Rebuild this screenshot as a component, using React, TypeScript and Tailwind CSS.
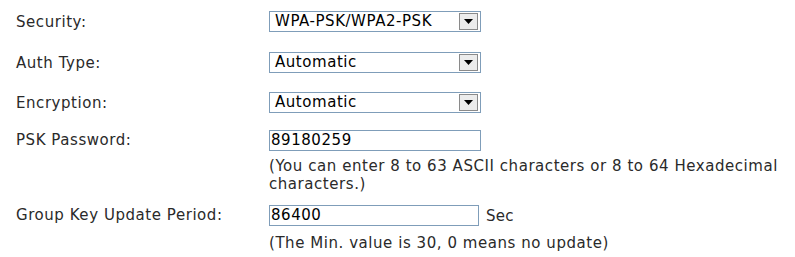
import React from 'react';

const labelCls = 'w-[253px] shrink-0';

function Select({ value }: { value: string }) {
  return (
    <div className="flex h-[21px] w-[212px] items-center border border-[#7f9db9] bg-white pl-[5px] pr-[2px]">
      <span className="flex-1 leading-none text-black">{value}</span>
      <div className="flex h-[17px] w-[19px] items-center justify-center border border-[#8a8a8a] bg-[#ececec]">
        <svg width="9" height="5" viewBox="0 0 9 5">
          <path d="M0 0 H9 L4.5 5 Z" fill="#000" />
        </svg>
      </div>
    </div>
  );
}

function TextBox({ value, width }: { value: string; width: string }) {
  return (
    <div className={`flex h-[21px] items-center border border-[#7f9db9] bg-white pl-[1px] leading-none text-black ${width}`}>
      {value}
    </div>
  );
}

export default function App() {
  return (
    <div className="min-h-screen bg-white pl-[16px] pt-[11px] font-['DejaVu_Sans',sans-serif] text-[15px] leading-[18px] tracking-[0.55px] text-[#2a2a2a]">
      <div className="flex h-[21px] items-center">
        <div className={labelCls}>Security:</div>
        <Select value="WPA-PSK/WPA2-PSK" />
      </div>
      <div className="mt-[20px] flex h-[21px] items-center">
        <div className={labelCls}>Auth Type:</div>
        <Select value="Automatic" />
      </div>
      <div className="mt-[19px] flex h-[21px] items-center">
        <div className={labelCls}>Encryption:</div>
        <Select value="Automatic" />
      </div>
      <div className="mt-[17px] flex items-start">
        <div className={`${labelCls} leading-[21px]`}>PSK Password:</div>
        <div className="flex-1">
          <TextBox value="89180259" width="w-[212px]" />
          <p className="mt-[6px] leading-[18px]">
            (You can enter 8 to 63 ASCII characters or 8 to 64 Hexadecimal characters.)
          </p>
        </div>
      </div>
      <div className="mt-[12px] flex items-start">
        <div className={`${labelCls} leading-[21px]`}>Group Key Update Period:</div>
        <div className="flex-1">
          <div className="flex h-[21px] items-center gap-[7px]">
            <TextBox value="86400" width="w-[210px]" />
            <span className="tracking-[0.3px]">Sec</span>
          </div>
          <p className="mt-[8px] leading-[18px]">(The Min. value is 30, 0 means no update)</p>
        </div>
      </div>
    </div>
  );
}
